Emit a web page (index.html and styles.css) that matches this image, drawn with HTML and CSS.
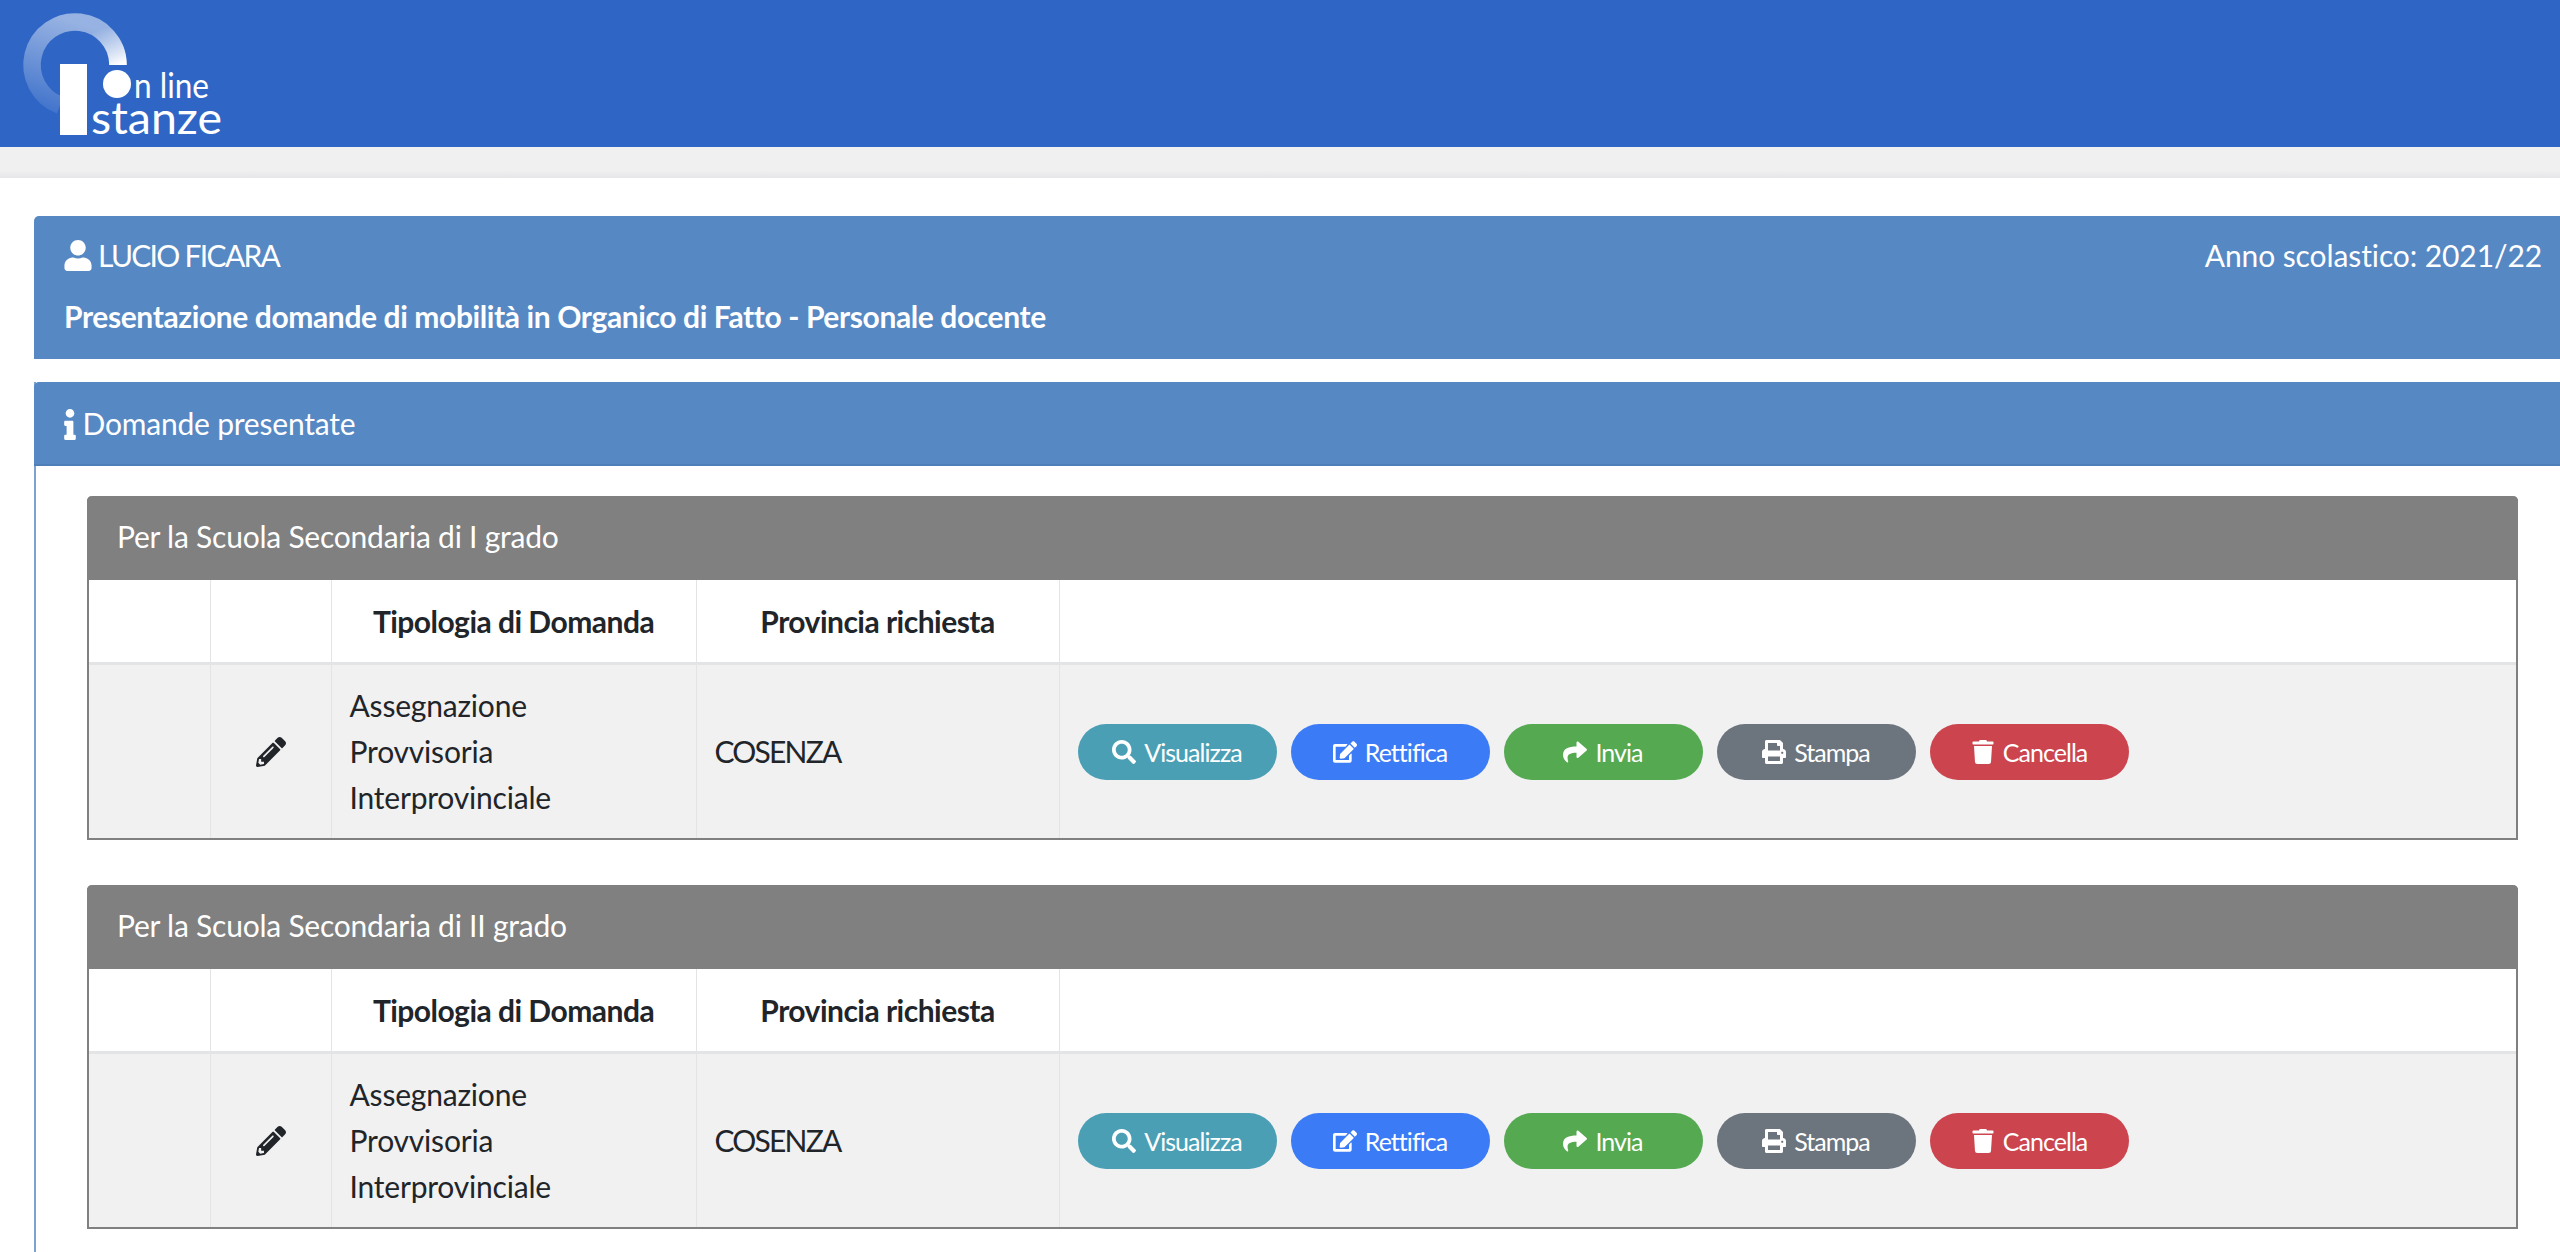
FILE: index.html
```html
<!DOCTYPE html>
<html lang="it">
<head>
<meta charset="utf-8">
<title>Istanze On Line</title>
<link rel="stylesheet" href="styles.css">
</head>
<body>
<svg class="defs" width="0" height="0" aria-hidden="true">
  <symbol id="i-user" viewBox="0 0 448 512"><path d="M224 256c70.7 0 128-57.3 128-128S294.7 0 224 0 96 57.3 96 128s57.3 128 128 128zm89.6 32h-16.7c-22.2 10.2-46.9 16-72.9 16s-50.6-5.8-72.9-16h-16.7C60.2 288 0 348.2 0 422.4V464c0 26.5 21.5 48 48 48h352c26.5 0 48-21.5 48-48v-41.6c0-74.2-60.2-134.4-134.4-134.4z"/></symbol>
  <symbol id="i-info" viewBox="0 0 192 512"><path d="M20 424.229h20V279.771H20c-11.046 0-20-8.954-20-20V212c0-11.046 8.954-20 20-20h112c11.046 0 20 8.954 20 20v212.229h20c11.046 0 20 8.954 20 20V492c0 11.046-8.954 20-20 20H20c-11.046 0-20-8.954-20-20v-47.771c0-11.046 8.954-20 20-20zM96 0C56.235 0 24 32.235 24 72s32.235 72 72 72 72-32.235 72-72S135.764 0 96 0z"/></symbol>
  <symbol id="i-pencil" viewBox="0 0 512 512"><path d="M497.9 142.1l-46.1 46.1c-4.7 4.7-12.3 4.7-17 0l-111-111c-4.7-4.7-4.7-12.3 0-17l46.1-46.1c18.7-18.7 49.1-18.7 67.9 0l60.1 60.1c18.8 18.7 18.8 49.1 0 67.9zM284.2 99.8L21.6 362.4.4 483.9c-2.9 16.4 11.4 30.6 27.8 27.8l121.5-21.3 262.6-262.6c4.7-4.7 4.7-12.3 0-17l-111-111c-4.8-4.7-12.4-4.7-17.1 0zM124.1 339.9c-5.5-5.5-5.5-14.3 0-19.8l154-154c5.5-5.5 14.3-5.5 19.8 0s5.5 14.3 0 19.8l-154 154c-5.5 5.5-14.3 5.5-19.8 0zM88 424h48v36.3l-64.5 11.3-31.1-31.1L51.7 376H88v48z"/></symbol>
  <symbol id="i-search" viewBox="0 0 512 512"><path d="M505 442.7L405.3 343c-4.5-4.5-10.6-7-17-7H372c27.6-35.3 44-79.7 44-128C416 93.1 322.9 0 208 0S0 93.1 0 208s93.1 208 208 208c48.3 0 92.7-16.4 128-44v16.3c0 6.4 2.5 12.5 7 17l99.7 99.7c9.4 9.4 24.6 9.4 33.9 0l28.3-28.3c9.4-9.4 9.4-24.6.1-34zM208 336c-70.7 0-128-57.2-128-128 0-70.7 57.2-128 128-128 70.7 0 128 57.2 128 128 0 70.7-57.2 128-128 128z"/></symbol>
  <symbol id="i-edit" viewBox="0 0 576 512"><path d="M402.6 83.2l90.2 90.2c3.8 3.8 3.8 10 0 13.8L274.4 405.6l-92.8 10.3c-12.4 1.4-22.9-9.1-21.5-21.5l10.3-92.8L388.8 83.2c3.8-3.8 10-3.8 13.8 0zm162-22.9l-48.8-48.8c-15.2-15.2-39.9-15.2-55.2 0l-35.4 35.4c-3.8 3.8-3.8 10 0 13.8l90.2 90.2c3.8 3.8 10 3.8 13.8 0l35.4-35.4c15.2-15.3 15.2-40 0-55.2zM384 346.2V448H64V128h229.8c3.2 0 6.2-1.3 8.5-3.5l40-40c7.6-7.6 2.2-20.5-8.5-20.5H48C21.5 64 0 85.5 0 112v352c0 26.5 21.5 48 48 48h352c26.5 0 48-21.5 48-48V306.2c0-10.7-12.9-16-20.5-8.5l-40 40c-2.2 2.3-3.5 5.3-3.5 8.5z"/></symbol>
  <symbol id="i-share" viewBox="0 0 512 512"><path d="M503.691 189.836L327.687 37.851C312.281 24.546 288 35.347 288 56.015v80.053C127.371 137.907 0 170.1 0 322.326c0 61.441 39.581 122.309 83.333 154.132 13.653 9.931 33.111-2.533 28.077-18.631C66.066 312.814 132.917 274.316 288 272.085V360c0 20.7 24.3 31.453 39.687 18.164l176.004-152c11.071-9.562 11.086-26.753 0-36.328z"/></symbol>
  <symbol id="i-print" viewBox="0 0 512 512"><path d="M448 192V77.25c0-8.49-3.37-16.62-9.37-22.63L393.37 9.37c-6-6-14.14-9.37-22.63-9.37H96C78.33 0 64 14.33 64 32v160c-35.35 0-64 28.65-64 64v112c0 8.84 7.16 16 16 16h48v96c0 17.67 14.33 32 32 32h320c17.67 0 32-14.33 32-32v-96h48c8.84 0 16-7.16 16-16V256c0-35.35-28.65-64-64-64zm-64 256H128v-96h256v96zm0-224H128V64h192v48c0 8.84 7.16 16 16 16h48v96zm48 72c-13.25 0-24-10.75-24-24 0-13.26 10.75-24 24-24s24 10.74 24 24c0 13.25-10.75 24-24 24z"/></symbol>
  <symbol id="i-trash" viewBox="0 0 448 512"><path d="M432 32H312l-9.4-18.7A24 24 0 0 0 281.1 0H166.8a23.72 23.72 0 0 0-21.4 13.3L136 32H16A16 16 0 0 0 0 48v32a16 16 0 0 0 16 16h416a16 16 0 0 0 16-16V48a16 16 0 0 0-16-16zM53.2 467a48 48 0 0 0 47.9 45h245.8a48 48 0 0 0 47.9-45L416 128H32z"/></symbol>
</svg>

<header class="topbar">
  <svg class="logo" width="240" height="147" viewBox="0 0 240 147" role="img" aria-label="Istanze On line">
    <defs>
      <linearGradient id="ring-base" gradientUnits="userSpaceOnUse" x1="45" y1="112" x2="75" y2="22">
        <stop offset="0" stop-color="#fff" stop-opacity="0.08"/>
        <stop offset="0.5" stop-color="#fff" stop-opacity="0.3"/>
        <stop offset="1" stop-color="#fff" stop-opacity="0.5"/>
      </linearGradient>
      <linearGradient id="ring-glow" gradientUnits="userSpaceOnUse" x1="105" y1="28" x2="118" y2="65">
        <stop offset="0" stop-color="#fff" stop-opacity="0"/>
        <stop offset="1" stop-color="#fff" stop-opacity="1"/>
      </linearGradient>
    </defs>
    <path d="M60 105.3 A43 43 0 1 1 118 65" fill="none" stroke="url(#ring-base)" stroke-width="17.5"/>
    <path d="M75 22 A43 43 0 0 1 118 65" fill="none" stroke="url(#ring-glow)" stroke-width="17.5"/>
    <rect x="60" y="64" width="27" height="71" fill="#fff"/>
    <circle cx="117" cy="84" r="14" fill="#fff"/>
    <text class="logo-text logo-online" x="134" y="98" textLength="75" lengthAdjust="spacingAndGlyphs">n line</text>
    <text class="logo-text logo-stanze" x="91" y="134" textLength="131" lengthAdjust="spacingAndGlyphs">stanze</text>
  </svg>
</header>
<div class="subbar"></div>

<main class="page">
  <section class="userbox">
    <div class="user-row">
      <span class="user-name"><svg class="ic ic-user"><use href="#i-user"/></svg> LUCIO FICARA</span>
      <span class="year">Anno scolastico: 2021/22</span>
    </div>
    <div class="user-title">Presentazione domande di mobilità in Organico di Fatto - Personale docente</div>
  </section>

  <section class="panel">
    <h2 class="panel-head"><svg class="ic ic-info"><use href="#i-info"/></svg> Domande presentate</h2>
    <div class="panel-body">

      <article class="card">
        <h3 class="card-head">Per la Scuola Secondaria di I grado</h3>
        <table class="grid">
          <colgroup><col class="c1"><col class="c2"><col class="c3"><col class="c4"><col></colgroup>
          <thead>
            <tr><th></th><th></th><th>Tipologia di Domanda</th><th>Provincia richiesta</th><th></th></tr>
          </thead>
          <tbody>
            <tr>
              <td></td>
              <td class="cell-icon"><svg class="ic ic-pencil"><use href="#i-pencil"/></svg></td>
              <td class="cell-type">Assegnazione Provvisoria Interprovinciale</td>
              <td class="cell-prov">COSENZA</td>
              <td>
                <div class="actions">
                  <a class="btn teal"><svg class="ic"><use href="#i-search"/></svg> Visualizza</a>
                  <a class="btn blue"><svg class="ic"><use href="#i-edit"/></svg> Rettifica</a>
                  <a class="btn green"><svg class="ic"><use href="#i-share"/></svg> Invia</a>
                  <a class="btn grey"><svg class="ic"><use href="#i-print"/></svg> Stampa</a>
                  <a class="btn red"><svg class="ic"><use href="#i-trash"/></svg> Cancella</a>
                </div>
              </td>
            </tr>
          </tbody>
        </table>
      </article>

      <article class="card">
        <h3 class="card-head">Per la Scuola Secondaria di II grado</h3>
        <table class="grid">
          <colgroup><col class="c1"><col class="c2"><col class="c3"><col class="c4"><col></colgroup>
          <thead>
            <tr><th></th><th></th><th>Tipologia di Domanda</th><th>Provincia richiesta</th><th></th></tr>
          </thead>
          <tbody>
            <tr>
              <td></td>
              <td class="cell-icon"><svg class="ic ic-pencil"><use href="#i-pencil"/></svg></td>
              <td class="cell-type">Assegnazione Provvisoria Interprovinciale</td>
              <td class="cell-prov">COSENZA</td>
              <td>
                <div class="actions">
                  <a class="btn teal"><svg class="ic"><use href="#i-search"/></svg> Visualizza</a>
                  <a class="btn blue"><svg class="ic"><use href="#i-edit"/></svg> Rettifica</a>
                  <a class="btn green"><svg class="ic"><use href="#i-share"/></svg> Invia</a>
                  <a class="btn grey"><svg class="ic"><use href="#i-print"/></svg> Stampa</a>
                  <a class="btn red"><svg class="ic"><use href="#i-trash"/></svg> Cancella</a>
                </div>
              </td>
            </tr>
          </tbody>
        </table>
      </article>

    </div>
  </section>
</main>
</body>
</html>
```

FILE: styles.css
```css
* { box-sizing: border-box; }
html, body { height: 100%; }
body {
  margin: 0;
  overflow: hidden;
  display: flex;
  flex-direction: column;
  background: #fff;
  color: #212529;
  font-family: "Lato", "Open Sans", sans-serif;
  font-size: 30px;
  line-height: 46px;
}
.defs { position: absolute; }
.ic { width: 1em; height: 1em; fill: currentColor; vertical-align: -0.12em; }

.topbar { flex: none; height: 147px; background: #2f66c6; }
.logo { display: block; }
.logo-text { fill: #fff; font-family: "Lato", sans-serif; font-weight: 400; }
.logo-online { font-size: 34px; }
.logo-stanze { font-size: 45px; }
.subbar {
  flex: none;
  height: 31px;
  background: linear-gradient(#f0f0f1 75%, #e6e6e8);
}

.page { flex: 1; display: flex; flex-direction: column; padding: 38px 0 0 34px; }

.userbox {
  flex: none;
  height: 143px;
  padding: 16px 18px 0 30px;
  background: #5688c4;
  color: #fff;
  border-radius: 5px 0 0 0;
}
.user-row { display: flex; justify-content: space-between; }
.user-name { letter-spacing: -1.7px; }
.year { letter-spacing: -0.1px; }
.user-title { margin-top: 15px; font-weight: 700; letter-spacing: -0.39px; }
.ic-user { width: 28px; height: 31px; }

.panel { flex: 1; margin-top: 23px; border-left: 2px solid #7da2d2; }
.panel-head {
  height: 84px;
  margin: 0 0 0 -2px;
  padding: 18px 0 0 30px;
  background: #5688c4;
  border-bottom: 2px solid #4f7fb9;
  border-radius: 5px 0 0 0;
  color: #fff;
  font-size: 30px;
  font-weight: 400;
  line-height: 46px;
  letter-spacing: -0.2px;
}
.ic-info { width: 12px; height: 31px; vertical-align: -5px; margin-right: -1px; }

.panel-body { padding: 30px 42px 0 51px; display: flex; flex-direction: column; gap: 45px; }

.card { border: 2px solid #808080; border-top: 0; border-radius: 5px 5px 0 0; }
.card-head {
  height: 84px;
  margin: 0 -2px;
  padding: 17px 30px 0;
  background: #808080;
  color: #fff;
  font-size: 30px;
  font-weight: 400;
  line-height: 46px;
  letter-spacing: -0.23px;
  border-radius: 5px 5px 0 0;
}

.grid { width: 100%; table-layout: fixed; border-collapse: collapse; }
.c1 { width: 121px; }
.c2 { width: 121px; }
.c3 { width: 365px; }
.c4 { width: 363px; }
.grid th, .grid td { border: 1px solid #e3e4e6; padding: 0 18px; text-align: left; }
.grid tr > :first-child { border-left: 0; }
.grid tr > :last-child { border-right: 0; }
.grid th {
  height: 83px;
  border-top: 0;
  border-bottom: 3px solid #e3e4e6;
  background: #fff;
  text-align: center;
  font-weight: 700;
  color: #212529;
  letter-spacing: -0.52px;
}
.grid td { height: 175px; border-bottom: 0; background: #f1f1f2; }
.cell-type { letter-spacing: -0.2px; padding-left: 19px; }
.cell-prov { letter-spacing: -1.8px; }
.cell-icon { text-align: center !important; }
.ic-pencil { width: 30px; height: 30px; color: #212529; vertical-align: -4px; }

.actions { display: flex; gap: 14px; padding-top: 1px; }
.btn {
  display: flex;
  align-items: center;
  justify-content: center;
  gap: 8px;
  width: 199px;
  height: 56px;
  border-radius: 28px;
  color: #fff;
  font-size: 25px;
  line-height: 30px;
  letter-spacing: -0.95px;
}
.btn .ic { width: 24px; height: 24px; flex: none; }
.teal { background: #4b9fb5; }
.blue { background: #3b7bf6; }
.green { background: #55a951; }
.grey { background: #6c757d; }
.red { background: #cb444e; }
```
